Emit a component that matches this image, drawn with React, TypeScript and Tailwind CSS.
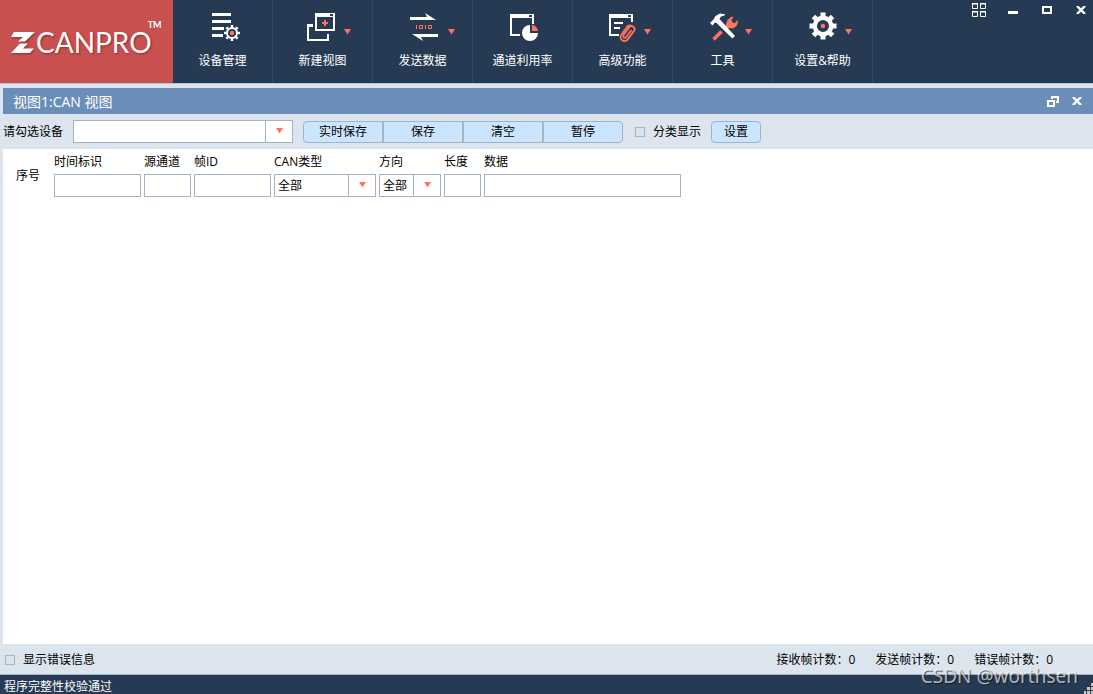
import type { ReactNode } from 'react'

const ACCENT = '#ff7460'
const NAVY = '#273a53'

function Gear({ cx, cy, r, tooth, ring, width }: { cx: number; cy: number; r: number; tooth: number; ring: number; width: number }) {
  return (
    <g transform={`translate(${cx} ${cy})`}>
      {[0, 45, 90, 135].map((a) => (
        <g key={a} transform={`rotate(${a})`}>
          <rect x={-tooth / 2} y={-r} width={tooth} height={r - ring} fill="#fff" />
          <rect x={-tooth / 2} y={ring} width={tooth} height={r - ring} fill="#fff" />
        </g>
      ))}
      <circle r={ring} fill="none" stroke="#fff" strokeWidth={width} />
      <circle r="2.2" fill={ACCENT} />
    </g>
  )
}

function Caret({ x }: { x: number }) {
  return <path d={`M${x} 17h7l-3.5 5.5z`} fill={ACCENT} />
}

function ToolIcon({ children }: { children: ReactNode }) {
  return (
    <svg width="65" height="30" viewBox="0 0 65 30" aria-hidden>
      {children}
    </svg>
  )
}

const tools: { label: string; icon: ReactNode }[] = [
  {
    label: '设备管理',
    icon: (
      <>
        <path d="M22 1h19v3H22zM22 8h19v3H22zM22 15h12v3H22zM22 22h11v3H22z" fill="#fff" />
        <Gear cx={42} cy={21} r={8} tooth={2.4} ring={5} width={2} />
      </>
    ),
  },
  {
    label: '新建视图',
    icon: (
      <>
        <path d="M17 12h6v3h-4v12h18v-5h2v7H17z" fill="#fff" />
        <path d="M25 1h20v18H25zM27 5v12h16V5z" fill="#fff" fillRule="evenodd" />
        <path d="M40 2h3v2h-3z" fill={NAVY} />
        <path d="M34 8h2v2h2v2h-2v2h-2v-2h-2v-2h2z" fill={ACCENT} />
        <Caret x={54} />
      </>
    ),
  },
  {
    label: '发送数据',
    icon: (
      <>
        <path d="M20 5h17l-2-4 11 7H20zM48 22H22l11 7-2-4h17z" fill="#fff" />
        <path d="M26 13h1v4h-1zM35 13h1v4h-1z" fill={ACCENT} />
        <path d="M29.5 13.5h3v3h-3zM38.5 13.5h3v3h-3z" fill="none" stroke={ACCENT} />
        <Caret x={58} />
      </>
    ),
  },
  {
    label: '通道利用率',
    icon: (
      <>
        <path d="M20 2h24v10h-2V6H22v16h8v2H20z" fill="#fff" />
        <path d="M39 3h3v2h-3z" fill={NAVY} />
        <path d="M40 13v8h8a8 8 0 1 1-8-8z" fill="#fff" />
        <path d="M42 13a6.5 6.5 0 0 1 6 6h-6z" fill={ACCENT} />
      </>
    ),
  },
  {
    label: '高级功能',
    icon: (
      <>
        <path d="M19 2h24v8h-2V6H21v16h8v2H19zM24 10h9v2h-9zM24 15h6v2h-6z" fill="#fff" />
        <path d="M38 3h3v2h-3z" fill={NAVY} />
        <g transform="translate(37.5 21) rotate(36)" fill="none" stroke={ACCENT} strokeWidth="1.8" strokeLinecap="round">
          <path d="M-4-4V5a4 4 0 0 0 8 0V-5.5a3 3 0 0 0-6 0V4a1.7 1.7 0 0 0 3.4 0V-4M-4-4A4 4 0 0 1-1.5-8" />
        </g>
        <Caret x={54} />
      </>
    ),
  },
  {
    label: '工具',
    icon: (
      <>
        <path d="M23.5 27.500l8-8" stroke={ACCENT} strokeWidth="3.600" />
        <path d="M36 12l1.500-4 4-3.500 2 .500-2 3 1 2.500 2.500.500 2.500-3 .500 2-1.500 4-3.500 2.500-4-.500-2 1.500-2-1.500z" fill={ACCENT} />
        <path d="M20 11l3.500-3.500 2-3.500 4.500-2.500 5 .800-.500 1.200-3.500 1-1.500 2.500 15.500 17-2.600 2.600-16.400-16.100-1.500.500-2 2.500z" fill="#fff" />
        <Caret x={55} />
      </>
    ),
  },
  {
    label: '设置&帮助',
    icon: (
      <>
        <Gear cx={33} cy={14} r={13.5} tooth={5} ring={8.2} width={4.4} />
        <Caret x={55} />
      </>
    ),
  },
]

const fieldClass = 'h-[23px] w-full appearance-none rounded-none border border-[#a0b3c8] bg-white px-[3px] text-xs text-black outline-none'

function Dropdown({ id, options }: { id: string; options: string[] }) {
  return (
    <div className="relative">
      <select id={id} className={fieldClass}>
        {options.map((o) => (
          <option key={o}>{o}</option>
        ))}
      </select>
      <span className="pointer-events-none absolute inset-y-0 right-0 flex w-7 justify-center border-x border-[#a0b3c8] pt-2">
        <svg width="7" height="6" viewBox="0 0 7 6" aria-hidden>
          <path d="M0 0h7l-3.500 5.500z" fill={ACCENT} />
        </svg>
      </span>
    </div>
  )
}

const filters = [
  { id: 'time', label: '时间标识', width: 'w-[87px]' },
  { id: 'channel', label: '源通道', width: 'w-[47px]' },
  { id: 'frame', label: '帧ID', width: 'w-[77px]' },
  { id: 'type', label: 'CAN类型', width: 'w-[102px]', options: ['全部'] },
  { id: 'direction', label: '方向', width: 'w-[62px]', options: ['全部'] },
  { id: 'length', label: '长度', width: 'w-[37px]' },
  { id: 'data', label: '数据', width: 'w-[197px]' },
]

function Check({ label }: { label: string }) {
  return (
    <label className="flex items-center gap-2">
      <input type="checkbox" className="size-[10px] appearance-none border border-[#a0b3c8] checked:bg-[#6b8eb8]" />
      {label}
    </label>
  )
}

function CloseIcon() {
  return (
    <svg width="10" height="8" viewBox="0 0 10 8" aria-hidden>
      <path d="M1 0l8 8M9 0L1 8" stroke="#fff" strokeWidth="2.400" />
    </svg>
  )
}

export default function App() {
  return (
    <div className="relative flex h-screen flex-col overflow-hidden bg-[#dce4ed] font-['Open_Sans','Noto_Sans_CJK_SC',sans-serif] text-xs leading-4 text-black">
      <header className="flex h-[84px] shrink-0 border-b border-[#b4c4d6] bg-[#273a53] text-white">
        <div className="flex w-[173px] items-start bg-[#c85150] pl-[11px] pt-5">
          <svg width="25" height="22" viewBox="0 0 25 22" className="mt-3 drop-shadow-[1px_1px_1px_#8a3030]" role="img" aria-label="Z">
            <path d="M3 0h21L14 9.500H7L12 5H0zM9 11.500h8l-5 5h11L19 21H0z" fill="#fff" />
          </svg>
          <span className="mt-1 font-['Lato',sans-serif] text-[28px] leading-9 [text-shadow:1px_1px_2px_#8a3030]">CANPRO</span>
          <span className="-ml-1 font-['Lato',sans-serif] text-[9px] font-bold leading-[10px]">TM</span>
        </div>
        <nav className="flex">
          {tools.map((t) => (
            <button key={t.label} type="button" className="flex w-[100px] flex-col items-center border-r border-[#304866] pt-3">
              <ToolIcon>{t.icon}</ToolIcon>
              <span className="mt-[11px]">{t.label}</span>
            </button>
          ))}
        </nav>
        <div className="ml-auto flex h-5 items-center gap-6 pr-[7px]">
          <button type="button" aria-label="布局" className="-mr-[2px]">
            <svg width="14" height="14" viewBox="0 0 14 14" fill="none" stroke="#fff">
              <path d="M.5 1h5v4.500h-5zM8.500 1h5v4.500h-5zM.5 9h5v4.500h-5zM8.500 9h5v4.500h-5z" />
              <path d="M0 .5h6M8 .5h6M0 8.500h6M8 8.500h6" />
            </svg>
          </button>
          <button type="button" aria-label="最小化">
            <svg width="10" height="8" viewBox="0 0 10 8">
              <path d="M0 5h10v3H0z" fill="#fff" />
            </svg>
          </button>
          <button type="button" aria-label="最大化">
            <svg width="10" height="8" viewBox="0 0 10 8">
              <path d="M1 1h8v6H1z" fill="none" stroke="#fff" strokeWidth="2" />
            </svg>
          </button>
          <button type="button" aria-label="关闭">
            <CloseIcon />
          </button>
        </div>
      </header>

      <main className="flex min-h-0 flex-1 flex-col pl-[3px] pt-1">
        <div className="flex h-[26px] shrink-0 items-center bg-[#6b8eb8] pl-[10px] pr-[11px] text-white">
          <h1 className="pt-px text-sm leading-5">视图1:CAN 视图</h1>
          <button type="button" aria-label="还原" className="ml-auto">
            <svg width="12" height="11" viewBox="0 0 12 11">
              <path d="M5 3V1h6v5H9M1 5h6v5H1z" fill="none" stroke="#fff" strokeWidth="2" />
            </svg>
          </button>
          <button type="button" aria-label="关闭视图" className="ml-[13px]">
            <CloseIcon />
          </button>
        </div>

        <div className="flex h-[35px] shrink-0 items-center">
          <label htmlFor="device">请勾选设备</label>
          <div className="ml-[10px] w-[220px]">
            <Dropdown id="device" options={['']} />
          </div>
          <div className="ml-[10px] flex">
            {['实时保存', '保存', '清空', '暂停'].map((b) => (
              <button key={b} type="button" className="h-[22px] w-20 border border-[#a0b3c8] bg-[#cce5ff] first:rounded-l last:rounded-r">
                {b}
              </button>
            ))}
          </div>
          <div className="ml-3">
            <Check label="分类显示" />
          </div>
          <button type="button" className="ml-[10px] h-[22px] w-[50px] rounded border border-[#a0b3c8] bg-[#cce5ff]">
            设置
          </button>
        </div>

        <section className="min-h-0 flex-1 overflow-auto bg-white pt-[5px]">
          <div className="flex items-center gap-[3px] pl-[13px]">
            <span className="w-[35px]">序号</span>
            {filters.map((f) => (
              <div key={f.id} className={f.width}>
                <label htmlFor={f.id} className="mb-1 block whitespace-nowrap">
                  {f.label}
                </label>
                {f.options ? <Dropdown id={f.id} options={f.options} /> : <input id={f.id} type="text" className={`${fieldClass} block`} />}
              </div>
            ))}
          </div>
        </section>

        <div className="flex h-[30px] shrink-0 items-center pl-[2px] pr-10 pt-[2px]">
          <Check label="显示错误信息" />
          <div className="ml-auto flex gap-5">
            <span>接收帧计数：0</span>
            <span>发送帧计数：0</span>
            <span>错误帧计数：0</span>
          </div>
        </div>
      </main>

      <footer className="flex h-5 shrink-0 items-end justify-between border-t border-[#a0b3c8] bg-[#273a53] pl-1 text-white">
        <span className="leading-[14px]">程序完整性校验通过</span>
        <svg width="9" height="11" viewBox="0 0 9 11" fill="#c8c8c8" aria-hidden>
          <path d="M7 0h2v3H7zM3 4h3v3H3zM7 4h2v3H7zM0 8h2v3H0zM3 8h3v3H3zM7 8h2v3H7z" />
        </svg>
      </footer>

      <div className="pointer-events-none absolute bottom-1 right-[15px] font-['Noto_Sans',sans-serif] text-[19px] leading-7 text-white/65 [text-shadow:1px_1px_1px_#00000099]">
        CSDN @worthsen
      </div>
    </div>
  )
}
